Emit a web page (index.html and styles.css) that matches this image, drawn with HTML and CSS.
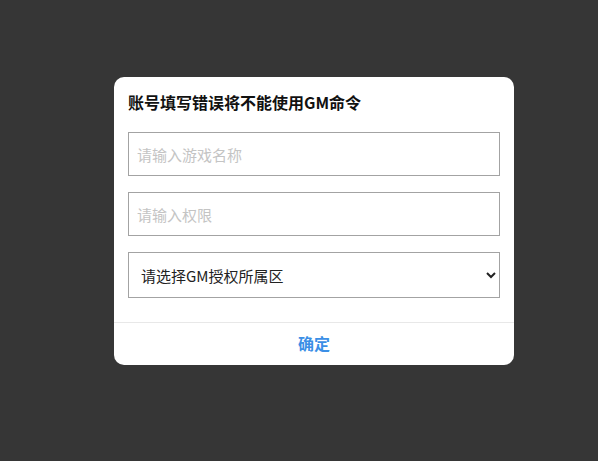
FILE: index.html
```html
<!DOCTYPE html>
<html lang="zh">
<head>
<meta charset="utf-8">
<link rel="stylesheet" href="styles.css">
</head>
<body>
<div class="dialog">
  <div class="body">
    <h2 class="title">账号填写错误将不能使用GM命令</h2>
    <input class="field" type="text" placeholder="请输入游戏名称">
    <input class="field" type="text" placeholder="请输入权限">
    <select class="field select">
      <option>请选择GM授权所属区</option>
    </select>
  </div>
  <div class="footer">
    <button class="ok">确定</button>
  </div>
</div>
</body>
</html>
```

FILE: styles.css
```css
html, body {
  margin: 0;
  padding: 0;
  background: #363636;
  height: 100%;
  font-family: "Noto Sans CJK SC", "Noto Sans", sans-serif;
}
body {
  padding-top: 77px;
  padding-left: 114px;
  box-sizing: border-box;
}
.dialog {
  width: 400px;
  background: #fff;
  border-radius: 10px;
  overflow: hidden;
}
.body {
  padding: 14px 14px 24px;
  display: flex;
  flex-direction: column;
  gap: 16px;
}
.title {
  margin: 0 0 3px;
  font-size: 16px;
  line-height: 22px;
  font-weight: bold;
  color: #111;
}
.field {
  box-sizing: border-box;
  width: 372px;
  height: 44px;
  margin: 0;
  border: 1px solid #a3a3a3;
  border-radius: 0;
  padding: 0 8px;
  font-family: inherit;
  font-size: 15px;
  color: #222;
  background: #fff;
  outline: none;
}
.field::placeholder {
  color: #c4c4c4;
}
.select {
  height: 46px;
  padding: 0 6px 0 8px;
  color: #222;
}
.footer {
  border-top: 1px solid #e8e8e8;
  height: 42px;
  display: flex;
  align-items: center;
  justify-content: center;
}
.ok {
  border: 0;
  background: none;
  padding: 0 0 2px;
  font-family: inherit;
  font-size: 16px;
  font-weight: bold;
  color: #3b8fe6;
  cursor: pointer;
}
```
